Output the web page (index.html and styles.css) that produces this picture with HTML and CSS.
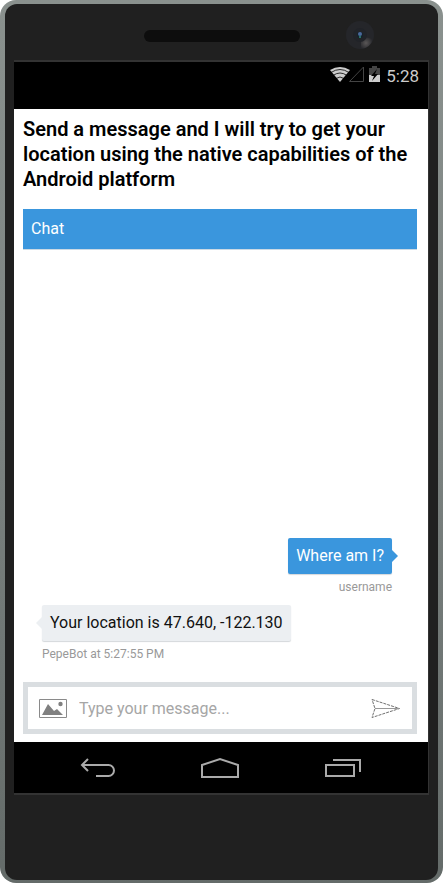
FILE: index.html
```html
<!DOCTYPE html>
<html lang="en">
<head>
<meta charset="utf-8">
<meta name="viewport" content="width=device-width, initial-scale=1">
<title>Chat</title>
<link rel="stylesheet" href="styles.css">
</head>
<body>
<div class="phone">
  <div class="body">
    <div class="bezel-top">
      <span class="speaker"></span>
      <svg class="camera" width="30" height="30" viewBox="0 0 30 30" aria-hidden="true">
        <defs>
          <radialGradient id="glare" cx="21" cy="23" r="7" gradientUnits="userSpaceOnUse">
            <stop offset="0" stop-color="#5a5757"/>
            <stop offset="1" stop-color="#25262a"/>
          </radialGradient>
        </defs>
        <circle cx="15" cy="15" r="14" fill="#25262a"/>
        <path d="M16 16 28 19A14 14 0 0 1 16 29Z" fill="url(#glare)"/>
        <circle cx="15" cy="15" r="7" fill="#212328"/>
        <circle cx="15" cy="15" r="3" fill="#15222b"/>
        <circle cx="15" cy="14" r="2" fill="#4a6a9c"/>
        <circle cx="15" cy="17" r="1" fill="#2f8a7c"/>
      </svg>
    </div>
    <div class="screen">
      <div class="status">
        <svg width="53" height="18" viewBox="0 0 53 18" aria-hidden="true">
          <path d="M1 4Q11-2 21 4L11 16Z" fill="#ccc"/>
          <path d="M2 6.500Q11 .5 20 6.500M4 9.500Q11 4.500 18 9.500M7 12.500Q11 9.500 15 12.500" fill="none" stroke="#000" stroke-width=".8"/>
          <path d="M20.500 15.500H34.500V1Z" fill="none" stroke="#444"/>
          <path d="M40 2h3V0h5v2h3v7H40Z" fill="#444"/>
          <path d="M40 9h11v7H40Z" fill="#ccc"/>
          <path d="M48 3 42 10h3l-2 5 6-7h-3Z" fill="#000"/>
        </svg>
        <span class="clock">5:28</span>
      </div>
      <main class="app">
        <h1>Send a message and I will try to get your location using the native capabilities of the Android platform</h1>
        <section class="chat">
          <h2>Chat</h2>
          <div class="messages">
            <div class="message mine">
              <p class="bubble">Where am I?</p>
              <span class="meta">username</span>
            </div>
            <div class="message bot">
              <p class="bubble">Your location is 47.640, -122.130</p>
              <span class="meta">PepeBot at 5:27:55 PM</span>
            </div>
          </div>
          <form class="composer">
            <button type="button" aria-label="Upload image">
              <svg width="28" height="20" viewBox="0 0 28 20"><path d="M.5.5h27v18H.5Z" fill="#fff" stroke="#8a8a8a"/><path d="M3 16 9 5l6 7 3-2 6 6Z" fill="#808080"/><circle cx="21.500" cy="5" r="2.200" fill="#808080"/></svg>
            </button>
            <input type="text" aria-label="Message" placeholder="Type your message...">
            <button type="button" aria-label="Send">
              <svg width="30" height="20" viewBox="0 0 30 20"><path d="M1 .5 28.500 9.500 1 18.500 4 9.500Z" fill="none" stroke="#707070" stroke-dasharray="3 1"/><path d="M4 9.500H28" stroke="#999"/></svg>
            </button>
          </form>
        </section>
      </main>
      <nav class="nav">
        <button type="button" aria-label="Back"><svg width="36" height="20" viewBox="0 0 36 20"><path d="M8 1 2 7l6 6M2 7h26.500a5.500 5.500 0 0 1 0 11H16" fill="none" stroke="#aaa" stroke-width="2"/></svg></button>
        <button type="button" aria-label="Home"><svg width="40" height="22" viewBox="0 0 40 22"><path d="M2 20V8L20 2l18 6v12Z" fill="none" stroke="#aaa" stroke-width="2"/></svg></button>
        <button type="button" aria-label="Recent apps"><svg width="38" height="20" viewBox="0 0 38 20"><path d="M2 7h28v11H2ZM9 2h27v12" fill="none" stroke="#aaa" stroke-width="2"/></svg></button>
      </nav>
    </div>
  </div>
</div>
</body>
</html>
```
FILE: styles.css
```css
* { box-sizing: border-box; }
body { margin: 0; background: #fff; font-family: Roboto, sans-serif; }
button { padding: 0; border: 0; background: none; }
svg { display: block; }

.phone {
  min-height: 100vh;
  margin-right: 1px;
  padding: 4px 5px 3px;
  display: flex;
  border-radius: 16px;
  background: linear-gradient(#8a918e, #7d8482 45%, #646b69);
}
.body {
  flex: 1;
  display: flex;
  flex-direction: column;
  padding: 0 9px 85px;
  border-radius: 12px;
  background: #202020;
}
.bezel-top {
  position: relative;
  height: 56px;
  display: flex;
  justify-content: center;
  padding-top: 26px;
}
.speaker { width: 156px; height: 12px; border-radius: 6px; background: #0d0d0d; }
.camera { position: absolute; right: 54px; top: 16px; }

.screen {
  flex: 1;
  display: flex;
  flex-direction: column;
  border: solid #333;
  border-width: 2px 1px 2px 0;
  background: #000;
}
.status {
  height: 47px;
  padding: 4px 9px 0;
  display: flex;
  justify-content: flex-end;
  align-items: flex-start;
  gap: 4px;
}
.clock { color: #ccc; font-size: 17px; line-height: 20px; }

.app {
  flex: 1;
  display: flex;
  flex-direction: column;
  padding: 8px 11px 8px 9px;
  background: #fff;
}
h1 { margin: 0 0 17px; color: #000; font-size: 20px; font-weight: 600; line-height: 25px; }
.chat { flex: 1; display: flex; flex-direction: column; }
h2 {
  margin: 0;
  padding: 0 8px;
  height: 41px;
  background: #3a96dd;
  border-bottom: 1px solid #cbd9e4;
  color: #fff;
  font-size: 16px;
  font-weight: 400;
  line-height: 40px;
}
.messages {
  flex: 1;
  display: flex;
  flex-direction: column;
  justify-content: flex-end;
  gap: 9px;
  padding: 0 25px 19px 19px;
}
.message { display: flex; flex-direction: column; align-items: flex-start; gap: 4px; }
.mine { align-items: flex-end; }
.bubble {
  position: relative;
  margin: 0;
  padding: 8px;
  border-radius: 2px;
  background: #eceff2;
  box-shadow: 0 1px 1px #d4d8db;
  color: #111;
  font-size: 16px;
  line-height: 20px;
}
.mine .bubble { background: #3a96dd; color: #fff; }
.bubble::after {
  content: "";
  position: absolute;
  top: 12px;
  right: 100%;
  border: 6px solid transparent;
  border-left-width: 0;
  border-right-color: #eceff2;
}
.mine .bubble::after {
  right: auto;
  left: 100%;
  border-width: 6px 0 6px 6px;
  border-color: transparent transparent transparent #3a96dd;
}
.meta { color: #999; font-size: 12px; line-height: 18px; }

.composer {
  height: 52px;
  padding: 1px 11px 0;
  display: flex;
  align-items: center;
  gap: 12px;
  border: 5px solid #dadee1;
}
.composer input {
  flex: 1;
  min-width: 0;
  padding: 0;
  border: 0;
  outline: 0;
  background: none;
  font: 16px/20px Roboto, sans-serif;
}
.composer input::placeholder { color: #a6a6a6; opacity: 1; }

.nav {
  height: 51px;
  padding: 0 66px;
  display: flex;
  justify-content: space-between;
  align-items: center;
}
```
